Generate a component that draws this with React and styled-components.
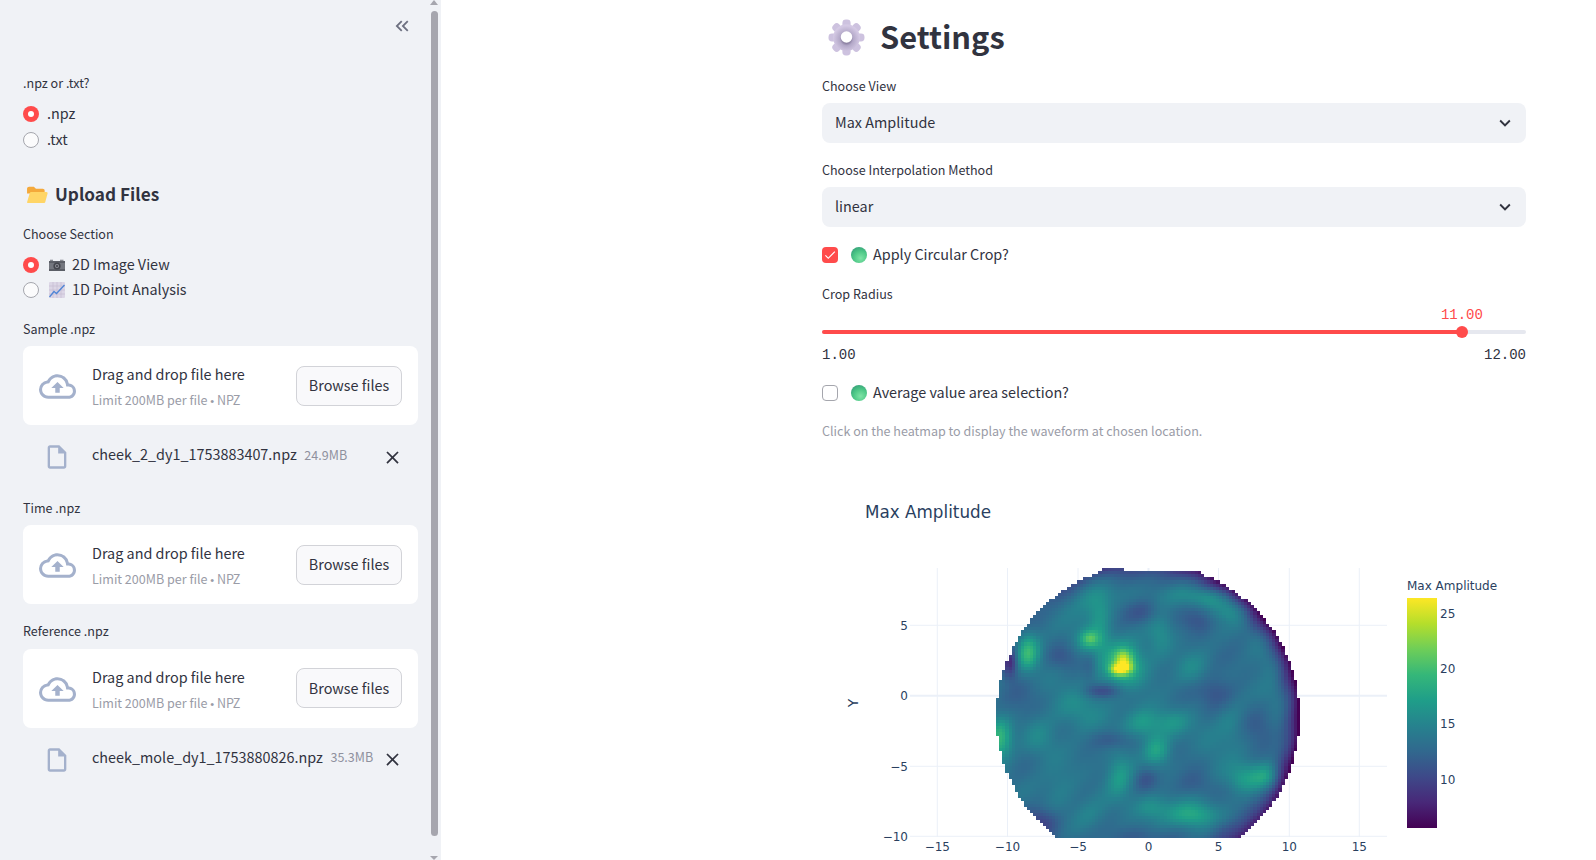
import React from 'react';
import styled, { createGlobalStyle } from 'styled-components';
import {
  MdOutlineCloudUpload,
  MdOutlineInsertDriveFile,
  MdClose,
  MdKeyboardDoubleArrowLeft,
  MdKeyboardArrowDown,
  MdCheck,
} from 'react-icons/md';

const SANS = '"Noto Sans CJK SC", "Source Sans Pro", "Noto Sans", sans-serif';
const MONO = '"Liberation Mono", "DejaVu Sans Mono", monospace';
const PLOT = '"DejaVu Sans", Verdana, sans-serif';
const INK = '#31333f';
const BODY_SIZE = 14.4;
const SMALL_SIZE = 12.55;

const Global = createGlobalStyle`
  html, body { margin: 0; padding: 0; height: 860px; overflow: hidden; background: #fff; }
  body { font-family: ${SANS}; color: ${INK}; }
  * { box-sizing: border-box; }
`;

const Page = styled.div`
  display: flex;
  width: 1596px;
  height: 860px;
  overflow: hidden;
`;

const Sidebar = styled.aside`
  position: relative;
  flex: 0 0 441px;
  height: 860px;
  background: #f0f2f6;
  padding: 0 23px;
  overflow: hidden;
`;

const CollapseRow = styled.div`
  display: flex;
  justify-content: flex-end;
  height: 73px;
  padding: 15px 5px 0 0;
  color: #6d7080;
  font-size: 22px;
`;

const ScrollTrack = styled.div`
  position: absolute;
  top: 0;
  right: 0;
  width: 11px;
  height: 860px;
`;

const ScrollThumb = styled.div`
  position: absolute;
  top: 11px;
  left: 1px;
  width: 7px;
  height: 825px;
  border-radius: 4px;
  background: #a6a6ae;
`;

const ScrollArrow = styled.div`
  position: absolute;
  left: 0;
  ${(p) => (p.$down ? 'bottom: 0;' : 'top: 0;')}
  width: 0;
  height: 0;
  border-left: 4.5px solid transparent;
  border-right: 4.5px solid transparent;
  ${(p) => (p.$down ? 'border-top: 4px solid #a6a6ae;' : 'border-bottom: 5px solid #a6a6ae;')}
`;

const Label = styled.div`
  height: 20px;
  margin-top: ${(p) => p.$top || 0}px;
  font-size: ${SMALL_SIZE}px;
  line-height: 20px;
  color: ${INK};
`;

const RadioGroup = styled.div`
  margin-top: ${(p) => p.$top || 0}px;
`;

const RadioRow = styled.div`
  display: flex;
  align-items: center;
  height: 25.5px;
  font-size: ${BODY_SIZE}px;
  line-height: 22px;
  color: ${INK};
`;

const RadioDot = styled.span`
  flex: none;
  display: flex;
  align-items: center;
  justify-content: center;
  width: 16px;
  height: 16px;
  border-radius: 50%;
  margin-right: 8px;
  background: ${(p) => (p.$on ? '#ff4b4b' : '#fbfbfc')};
  border: ${(p) => (p.$on ? 'none' : '1px solid #a5a6ad')};
  &::after {
    content: '';
    display: ${(p) => (p.$on ? 'block' : 'none')};
    width: 6px;
    height: 6px;
    border-radius: 50%;
    background: #fff;
  }
`;

const RowText = styled.span`
  margin-top: ${(p) => p.$rise || -2}px;
  margin-left: ${(p) => p.$left || 0}px;
`;

const EmojiSlot = styled.span`
  display: inline-flex;
  margin: 0 7px 0 2px;
`;

const SectionHeading = styled.h3`
  display: flex;
  align-items: center;
  gap: 7px;
  height: 28px;
  margin: 28px 0 0 3px;
  font-size: 17.2px;
  font-weight: 600;
  line-height: 28px;
  color: ${INK};
`;

const DropZone = styled.div`
  display: flex;
  align-items: center;
  width: 395px;
  height: 79px;
  margin-top: ${(p) => p.$top || 7}px;
  padding: 0 16px;
  background: #fff;
  border-radius: 8px;
`;

const CloudIcon = styled(MdOutlineCloudUpload)`
  flex: none;
  margin: 2px 16px 0 0;
  color: #a4b1cc;
`;

const DropText = styled.div`
  flex: 1;
  display: flex;
  flex-direction: column;
  gap: 5px;
  padding-top: 3px;
`;

const DropTitle = styled.div`
  font-size: ${BODY_SIZE}px;
  line-height: 22px;
  color: ${INK};
`;

const DropHint = styled.div`
  font-size: ${SMALL_SIZE}px;
  line-height: 20px;
  color: #9a9ca7;
`;

const Bullet = styled.span`
  font-family: "Liberation Sans", sans-serif;
  font-size: 11px;
`;

const BrowseButton = styled.button`
  flex: none;
  width: 106px;
  height: 40px;
  padding: 0 0 2px;
  border: 1px solid #d2d3d8;
  border-radius: 8px;
  background: #f9f9fb;
  font-family: ${SANS};
  font-size: ${BODY_SIZE}px;
  color: ${INK};
`;

const FileRow = styled.div`
  display: flex;
  align-items: center;
  height: 48px;
  margin-top: ${(p) => p.$top || 8}px;
  padding-left: 20px;
  position: relative;
`;

const FileIcon = styled(MdOutlineInsertDriveFile)`
  flex: none;
  margin-right: 21px;
  color: #a4b1cc;
`;

const FileName = styled.span`
  font-size: ${BODY_SIZE}px;
  color: ${INK};
  margin-top: -7px;
`;

const FileSize = styled.span`
  margin: -6px 0 0 7.5px;
  font-size: ${SMALL_SIZE}px;
  color: #8f919e;
`;

const CloseIcon = styled(MdClose)`
  position: absolute;
  left: 359px;
  top: 13.5px;
  color: ${INK};
`;

const Main = styled.main`
  flex: 1;
  height: 860px;
  padding-left: 381px;
  overflow: hidden;
`;

const Column = styled.div`
  width: 704px;
`;

const PageTitle = styled.h1`
  display: flex;
  align-items: center;
  gap: 15px;
  height: 44px;
  margin: 0;
  padding: 15px 0 0 6px;
  box-sizing: content-box;
  font-size: 30.8px;
  font-weight: 600;
  line-height: 44px;
  color: ${INK};
`;

const TitleText = styled.span`
  margin-top: -2px;
`;

const SelectBox = styled.div`
  display: flex;
  align-items: center;
  justify-content: space-between;
  height: 40px;
  margin-top: 7px;
  padding: 0 10px 0 13px;
  background: #f0f2f6;
  border-radius: 8px;
  font-size: ${BODY_SIZE}px;
  color: ${INK};
`;

const CheckRow = styled.div`
  display: flex;
  align-items: center;
  height: 24px;
  margin-top: ${(p) => p.$top}px;
  font-size: ${BODY_SIZE}px;
  color: ${INK};
`;

const CheckBox = styled.span`
  flex: none;
  display: flex;
  align-items: center;
  justify-content: center;
  width: 16px;
  height: 16px;
  margin-right: 13px;
  border-radius: 4px;
  color: #fff;
  background: ${(p) => (p.$on ? '#ff4b4b' : '#fff')};
  border: ${(p) => (p.$on ? 'none' : '1px solid #a5a6ad')};
`;

const Slider = styled.div`
  position: relative;
  height: 64px;
`;

const SliderTrack = styled.div`
  position: absolute;
  top: 26px;
  left: 0;
  right: 0;
  height: 4px;
  border-radius: 2px;
  background: #e6e8ef;
`;

const SliderFill = styled.div`
  height: 4px;
  border-radius: 2px;
  background: #ff4b4b;
`;

const SliderThumb = styled.div`
  position: absolute;
  top: 22px;
  width: 12px;
  height: 12px;
  margin-left: -6px;
  border-radius: 50%;
  background: #ff4b4b;
`;

const SliderValue = styled.div`
  position: absolute;
  top: 2px;
  transform: translateX(-50%);
  font-family: ${MONO};
  font-size: 14px;
  line-height: 18px;
  color: #ff4b4b;
`;

const SliderEnds = styled.div`
  position: absolute;
  top: 42px;
  left: 0;
  right: 0;
  display: flex;
  justify-content: space-between;
  font-family: ${MONO};
  font-size: 14px;
  line-height: 18px;
  color: ${INK};
`;

const Caption = styled.div`
  height: 20px;
  margin-top: 16px;
  font-size: ${SMALL_SIZE}px;
  line-height: 20px;
  color: #9a9ca7;
`;

const ChartFrame = styled.svg`
  display: block;
  width: 704px;
  height: 370px;
  margin-top: 49px;
`;

/* ---------- emoji drawings ---------- */
const Folder = () => (
  <svg width="22" height="19" viewBox="0 0 21 18">
    <path d="M1 3.5C1 2.2 1.9 1.5 3 1.5h4.5l2 2H16c1 0 1.8.7 1.8 1.8V8H1z" fill="#f4a93b" />
    <path d="M1 16.5 3.6 7.6C3.8 6.9 4.4 6.5 5 6.5h14.4c.9 0 1.4.8 1.2 1.6l-2.2 8c-.2.7-.7 1.1-1.4 1.1H2c-.7 0-1.1-.3-1-.7z" fill="#ffd566" />
  </svg>
);

const Camera = () => (
  <svg width="16" height="12" viewBox="0 0 16 12">
    <rect x="0" y="2" width="16" height="10" fill="#5b5e66" />
    <rect x="0" y="4" width="16" height="6" fill="#74777f" />
    <rect x="1" y="0.7" width="3" height="1.4" fill="#8b8d94" />
    <rect x="11" y="0.7" width="3.5" height="1.4" fill="#8b8d94" />
    <circle cx="8" cy="7" r="3.6" fill="#43454c" />
    <circle cx="8" cy="7" r="2" fill="#8e9199" />
    <circle cx="8" cy="7" r="1" fill="#3b3d44" />
  </svg>
);

const ChartEmoji = () => (
  <svg width="16" height="16" viewBox="0 0 16 16">
    <rect width="16" height="16" rx="1" fill="#dcd6e6" />
    <path d="M4 0v16M8 0v16M12 0v16M0 4h16M0 8h16M0 12h16" stroke="#c2bbd2" strokeWidth=".6" />
    <path d="M.5 15 5 9.5l2.5 2L15.5 3" fill="none" stroke="#4f85d6" strokeWidth="1.3" />
  </svg>
);

const Gear = () => {
  const teeth = Array.from({ length: 8 }, (_, i) => i * 45);
  return (
    <svg width="37" height="37" viewBox="0 0 36 36">
      <defs>
        <radialGradient id="gearRing" cx="50%" cy="56%" r="50%">
          <stop offset="26%" stopColor="#7f7496" />
          <stop offset="50%" stopColor="#b3a8c8" />
          <stop offset="100%" stopColor="#d4c9e4" />
        </radialGradient>
      </defs>
      {teeth.map((a) => (
        <rect key={a} x="14" y="0.5" width="8" height="8" rx="3.4" fill="#cdc2df" transform={`rotate(${a} 18 18)`} />
      ))}
      <circle cx="18" cy="18" r="13" fill="url(#gearRing)" />
      <circle cx="18" cy="17.5" r="5.6" fill="#fff" />
    </svg>
  );
};

const GreenBall = () => (
  <svg width="16" height="16" viewBox="0 0 16 16">
    <defs>
      <radialGradient id="ballFill" cx="60%" cy="70%" r="70%">
        <stop offset="0%" stopColor="#7fe3a6" />
        <stop offset="60%" stopColor="#4ec887" />
        <stop offset="100%" stopColor="#3aa87c" />
      </radialGradient>
    </defs>
    <circle cx="8" cy="8" r="8" fill="url(#ballFill)" />
  </svg>
);

/* ---------- heatmap ---------- */
const VIRIDIS = ['#440154', '#482878', '#3e4989', '#31688e', '#26828e', '#1f9e89', '#35b779', '#6ece58', '#b5de2b', '#fde725'];
const VMIN = 5.6;
const VMAX = 26.35;
const rgb = (h) => [1, 3, 5].map((i) => parseInt(h.slice(i, i + 2), 16));
const VRGB = VIRIDIS.map(rgb);

const colorOf = (v) => {
  const t = Math.min(1, Math.max(0, (v - VMIN) / (VMAX - VMIN))) * (VRGB.length - 1);
  const i = Math.min(VRGB.length - 2, Math.floor(t));
  const f = t - i;
  const c = VRGB[i].map((a, k) => Math.round(a + (VRGB[i + 1][k] - a) * f));
  return `rgb(${c[0]},${c[1]},${c[2]})`;
};

// [x, y, sx, sy, delta from base]
const BLOBS = [
  [1124, 668, 6, 5, 9], [1115, 670, 5, 4, 5], [1124, 657, 6, 6, 5], [1123, 664, 16, 16, 6],
  [1090, 639, 6, 5, 3.5], [1090, 640, 12, 10, 3.5],
  [1028, 652, 8, 13, 6], [1000, 738, 8, 14, 6],
  [1142, 723, 12, 11, 3.5], [1170, 722, 14, 10, 3], [1157, 750, 9, 11, 4],
  [1120, 775, 10, 16, 3.8], [1152, 807, 13, 9, 3], [1192, 815, 17, 10, 5],
  [1245, 778, 14, 11, 3.8], [1267, 776, 9, 9, 3.5],
  [1160, 633, 9, 17, 2.5], [1192, 670, 12, 12, 2], [1230, 610, 12, 8, 2.5], [1212, 598, 16, 7, 2],
  [1090, 600, 16, 16, 2], [1100, 618, 8, 16, 2.5], [1080, 710, 18, 15, 2.5],
  [1040, 740, 12, 14, 2], [1230, 725, 10, 15, 2], [1270, 693, 12, 12, 1.5],
  [1180, 596, 32, 8, 1.4], [1060, 790, 12, 18, 1.5], [1090, 815, 12, 12, 1.5], [1210, 745, 12, 16, 1],
  [1030, 600, 20, 20, 1], [1270, 640, 14, 20, 0.8], [1050, 680, 14, 14, 0.6],
  [1217, 693, 13, 12, -2.4], [1143, 613, 15, 9, -2.4], [1197, 620, 10, 9, -1.8], [1103, 691, 14, 5, -3],
  [1090, 667, 5, 12, -1.4], [1062, 657, 11, 9, -1.6], [1113, 740, 14, 6, -2], [1145, 779, 10, 9, -2],
  [1260, 727, 11, 13, -2], [1040, 822, 14, 10, -3], [1010, 663, 5, 10, -5], [1195, 785, 13, 10, -1.6],
  [1147, 836, 25, 6, -1.6], [1020, 700, 14, 14, -1], [1225, 830, 12, 8, -1.2],
];

const CX = 1148;
const CY = 716;
const R = 151.5;
const CELL = 3.1;

const fieldAt = (x, y) => {
  let v = 13.2;
  for (const [bx, by, sx, sy, a] of BLOBS) {
    const dx = (x - bx) / sx;
    const dy = (y - by) / sy;
    v += a * Math.exp(-(dx * dx + dy * dy) / 2);
  }
  v += 0.5 * Math.sin(x / 13 + 1.2) * Math.cos(y / 11) + 0.3 * Math.sin((x + y) / 7);
  const r = Math.hypot(x - CX, y - CY);
  const theta = Math.atan2(CY - y, x - CX);
  const band = Math.max(0, (r - (R - 26)) / 26);
  v -= band * band * (4 + 4.2 * Math.cos(theta - 0.2));
  return v;
};

const buildCells = () => {
  const cells = [];
  for (let row = 0; row < 87; row += 1) {
    const y0 = 568 + row * CELL;
    const yc = y0 + CELL / 2;
    for (let col = -50; col < 50; col += 1) {
      const x0 = CX + col * CELL;
      const xc = x0 + CELL / 2;
      const inside = Math.hypot(xc - CX, yc - CY) <= R;
      const top = row === 0 ? xc >= 1102 && xc <= 1124 : inside || (row < 3 && xc > 1110 && xc < 1200);
      if (top && y0 < 837) {
        cells.push({ x: x0, y: y0, fill: colorOf(fieldAt(xc, yc)) });
      }
    }
  }
  return cells;
};

const CELLS = buildCells();
const X_TICKS = [[-15, 937.3], [-10, 1007.5], [-5, 1078], [0, 1148.5], [5, 1218.5], [10, 1289.3], [15, 1359.3]];
const Y_TICKS = [[5, 625.3], [0, 695.7], [-5, 766.3], [-10, 836.3]];
const BAR_TICKS = [[25, 613], [20, 668], [15, 723], [10, 779]];
const fmt = (n) => (n < 0 ? `\u2212${-n}` : `${n}`);

const Heatmap = () => (
  <ChartFrame viewBox="822 490 704 370">
    <defs>
      <linearGradient id="cbar" x1="0" y1="1" x2="0" y2="0">
        {VIRIDIS.map((c, i) => (
          <stop key={c} offset={`${(i / (VIRIDIS.length - 1)) * 100}%`} stopColor={c} />
        ))}
      </linearGradient>
    </defs>
    <text x="865" y="518" fontFamily={PLOT} fontSize="16.8" fill="#2a3f5f">Max Amplitude</text>
    {X_TICKS.map(([, x]) => (
      <line key={x} x1={x} x2={x} y1="568" y2="837" stroke="#ebf0f8" strokeWidth={x === 1148.5 ? 2 : 1} />
    ))}
    {Y_TICKS.map(([, y]) => (
      <line key={y} x1="910" x2="1387" y1={y} y2={y} stroke="#ebf0f8" strokeWidth={y === 695.7 ? 2 : 1} />
    ))}
    <g shapeRendering="crispEdges">
      {CELLS.map((c) => (
        <rect key={`${c.x}-${c.y}`} x={c.x} y={c.y} width={CELL + 0.4} height={CELL + 0.4} fill={c.fill} />
      ))}
    </g>
    {X_TICKS.map(([n, x]) => (
      <text key={n} x={x} y="851" textAnchor="middle" fontFamily={PLOT} fontSize="12" fill="#2a3f5f">{fmt(n)}</text>
    ))}
    {Y_TICKS.map(([n, y]) => (
      <text key={n} x="908" y={y + 4.5} textAnchor="end" fontFamily={PLOT} fontSize="12" fill="#2a3f5f">{fmt(n)}</text>
    ))}
    <text transform="translate(858 703) rotate(-90)" textAnchor="middle" fontFamily={PLOT} fontSize="14" fill="#2a3f5f">Y</text>
    <text x="1407" y="590" fontFamily={PLOT} fontSize="12" fill="#2a3f5f">Max Amplitude</text>
    <rect x="1407" y="598" width="30" height="230" fill="url(#cbar)" />
    {BAR_TICKS.map(([n, y]) => (
      <text key={n} x="1440" y={y + 4.5} fontFamily={PLOT} fontSize="12" fill="#2a3f5f">{n}</text>
    ))}
  </ChartFrame>
);

/* ---------- page pieces ---------- */
const Uploader = ({ top }) => (
  <DropZone $top={top}>
    <CloudIcon size={37} />
    <DropText>
      <DropTitle>Drag and drop file here</DropTitle>
      <DropHint>Limit 200MB per file <Bullet>•</Bullet> NPZ</DropHint>
    </DropText>
    <BrowseButton>Browse files</BrowseButton>
  </DropZone>
);

const UploadedFile = ({ name, size }) => (
  <FileRow>
    <FileIcon size={28} />
    <FileName>{name}</FileName>
    <FileSize>{size}</FileSize>
    <CloseIcon size={21} />
  </FileRow>
);

const Radio = ({ on, emoji, children }) => (
  <RadioRow>
    <RadioDot $on={on} />
    {emoji && <EmojiSlot>{emoji}</EmojiSlot>}
    <RowText>{children}</RowText>
  </RadioRow>
);

export default function App() {
  return (
    <Page>
      <Global />
      <Sidebar>
        <CollapseRow>
          <MdKeyboardDoubleArrowLeft />
        </CollapseRow>
        <Label>.npz or .txt?</Label>
        <RadioGroup $top={8.5}>
          <Radio on>.npz</Radio>
          <Radio>.txt</Radio>
        </RadioGroup>
        <SectionHeading>
          <Folder />
          <RowText>Upload Files</RowText>
        </SectionHeading>
        <Label $top={15}>Choose Section</Label>
        <RadioGroup $top={8.5}>
          <Radio on emoji={<Camera />}>2D Image View</Radio>
          <Radio emoji={<ChartEmoji />}>1D Point Analysis</Radio>
        </RadioGroup>
        <Label $top={16}>Sample .npz</Label>
        <Uploader />
        <UploadedFile name="cheek_2_dy1_1753883407.npz" size="24.9MB" />
        <Label $top={17}>Time .npz</Label>
        <Uploader top={7} />
        <Label $top={16.5}>Reference .npz</Label>
        <Uploader top={8} />
        <UploadedFile name="cheek_mole_dy1_1753880826.npz" size="35.3MB" />
        <ScrollTrack>
          <ScrollArrow />
          <ScrollThumb />
          <ScrollArrow $down />
        </ScrollTrack>
      </Sidebar>
      <Main>
        <Column>
          <PageTitle>
            <Gear />
            <TitleText>Settings</TitleText>
          </PageTitle>
          <Label $top={17}>Choose View</Label>
          <SelectBox>
            <RowText $rise={-4}>Max Amplitude</RowText>
            <MdKeyboardArrowDown size={22} />
          </SelectBox>
          <Label $top={17}>Choose Interpolation Method</Label>
          <SelectBox>
            <RowText $rise={-4}>linear</RowText>
            <MdKeyboardArrowDown size={22} />
          </SelectBox>
          <CheckRow $top={16}>
            <CheckBox $on>
              <MdCheck size={14} />
            </CheckBox>
            <GreenBall />
            <RowText $left={6} $rise={-4}>Apply Circular Crop?</RowText>
          </CheckRow>
          <Label $top={17}>Crop Radius</Label>
          <Slider>
            <SliderValue style={{ left: '90.9%' }}>11.00</SliderValue>
            <SliderTrack>
              <SliderFill style={{ width: '90.9%' }} />
            </SliderTrack>
            <SliderThumb style={{ left: '90.9%' }} />
            <SliderEnds>
              <span>1.00</span>
              <span>12.00</span>
            </SliderEnds>
          </Slider>
          <CheckRow $top={13}>
            <CheckBox />
            <GreenBall />
            <RowText $left={6} $rise={-4}>Average value area selection?</RowText>
          </CheckRow>
          <Caption>Click on the heatmap to display the waveform at chosen location.</Caption>
          <Heatmap />
        </Column>
      </Main>
    </Page>
  );
}
